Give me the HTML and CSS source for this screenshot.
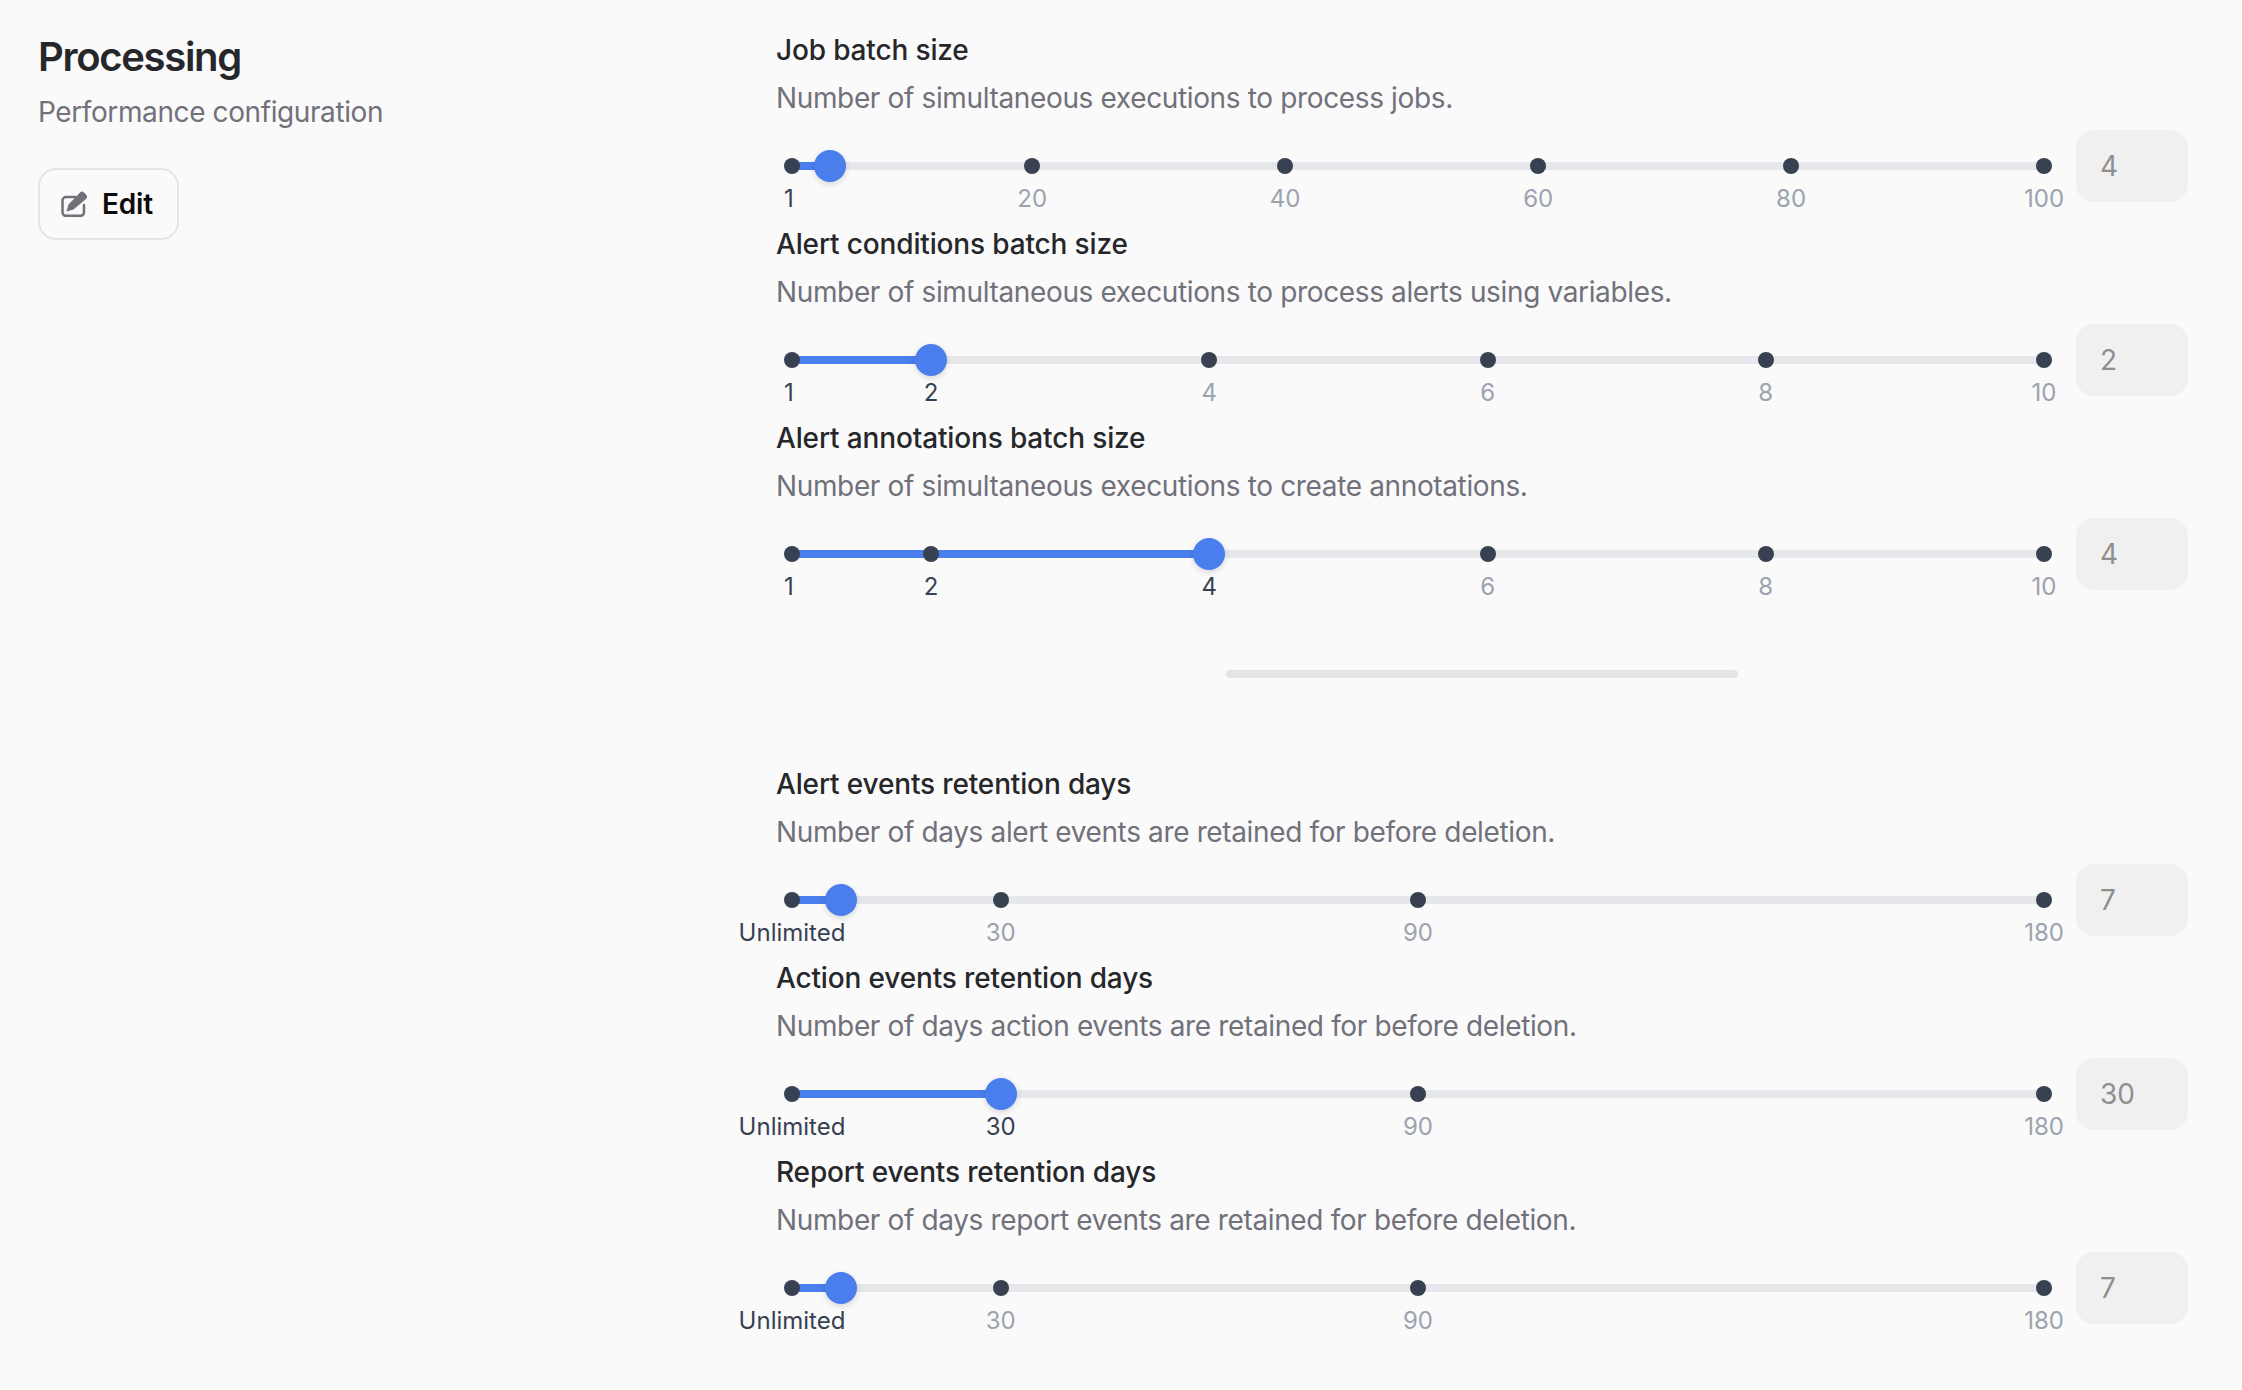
FILE: index.html
```html
<!DOCTYPE html>
<html lang="en">
<head>
    <meta charset="UTF-8">
    <title>Processing</title>
    <link rel="stylesheet" href="styles.css">
</head>
<body>
    <main class="page">
        <!-- left -->
        <section class="intro">
            <h1 class="intro__title">Processing</h1>
            <p class="intro__sub">Performance configuration</p>
            <button class="btn--edit" type="button">
                <svg class="btn__icon" viewBox="0 0 26 26" aria-hidden="true">
                    <path class="btn__box" d="M14 6H5a3.500 3.500 0 0 0-3.500 3.500V21.300a3.500 3.500 0 0 0 3.500 3.500H19.500a3.500 3.500 0 0 0 3.500-3.500V14"/>
                    <path class="btn__pen" d="M5.500 20.500L7.500 13.500L18.800 1.800a3 3 0 0 1 4.400 0l1.800 1.800a3 3 0 0 1 0 4.300L12.500 18.500z"/>
                </svg>
                Edit
            </button>
        </section>

        <!-- settings -->
        <section class="settings">
            <div class="field">
                <h2 class="field__label">Job batch size</h2>
                <p class="field__desc">Number of simultaneous executions to process jobs.</p>
                <div class="slider">
                    <div class="slider__box">
                        <div class="track">
                            <div class="track__fill" style="width: 3.03%"></div>
                            <span class="mark mark--on" style="left: 0%"><i class="mark__dot"></i><b class="mark__txt mark__txt--one">1</b></span>
                            <span class="mark" style="left: 19.19%"><i class="mark__dot"></i><b class="mark__txt">20</b></span>
                            <span class="mark" style="left: 39.39%"><i class="mark__dot"></i><b class="mark__txt">40</b></span>
                            <span class="mark" style="left: 59.6%"><i class="mark__dot"></i><b class="mark__txt">60</b></span>
                            <span class="mark" style="left: 79.8%"><i class="mark__dot"></i><b class="mark__txt">80</b></span>
                            <span class="mark" style="left: 100%"><i class="mark__dot"></i><b class="mark__txt">100</b></span>
                            <span class="thumb" style="left: 3.03%"></span>
                        </div>
                    </div>
                    <input class="slider__val" type="text" value="4" disabled>
                </div>
            </div>

            <div class="field">
                <h2 class="field__label">Alert conditions batch size</h2>
                <p class="field__desc">Number of simultaneous executions to process alerts using variables.</p>
                <div class="slider">
                    <div class="slider__box">
                        <div class="track">
                            <div class="track__fill" style="width: 11.11%"></div>
                            <span class="mark mark--on" style="left: 0%"><i class="mark__dot"></i><b class="mark__txt mark__txt--one">1</b></span>
                            <span class="mark mark--on" style="left: 11.11%"><i class="mark__dot"></i><b class="mark__txt">2</b></span>
                            <span class="mark" style="left: 33.33%"><i class="mark__dot"></i><b class="mark__txt">4</b></span>
                            <span class="mark" style="left: 55.56%"><i class="mark__dot"></i><b class="mark__txt">6</b></span>
                            <span class="mark" style="left: 77.78%"><i class="mark__dot"></i><b class="mark__txt">8</b></span>
                            <span class="mark" style="left: 100%"><i class="mark__dot"></i><b class="mark__txt">10</b></span>
                            <span class="thumb" style="left: 11.11%"></span>
                        </div>
                    </div>
                    <input class="slider__val" type="text" value="2" disabled>
                </div>
            </div>

            <div class="field">
                <h2 class="field__label">Alert annotations batch size</h2>
                <p class="field__desc">Number of simultaneous executions to create annotations.</p>
                <div class="slider">
                    <div class="slider__box">
                        <div class="track">
                            <div class="track__fill" style="width: 33.33%"></div>
                            <span class="mark mark--on" style="left: 0%"><i class="mark__dot"></i><b class="mark__txt mark__txt--one">1</b></span>
                            <span class="mark mark--on" style="left: 11.11%"><i class="mark__dot"></i><b class="mark__txt">2</b></span>
                            <span class="mark mark--on" style="left: 33.33%"><i class="mark__dot"></i><b class="mark__txt">4</b></span>
                            <span class="mark" style="left: 55.56%"><i class="mark__dot"></i><b class="mark__txt">6</b></span>
                            <span class="mark" style="left: 77.78%"><i class="mark__dot"></i><b class="mark__txt">8</b></span>
                            <span class="mark" style="left: 100%"><i class="mark__dot"></i><b class="mark__txt">10</b></span>
                            <span class="thumb" style="left: 33.33%"></span>
                        </div>
                    </div>
                    <input class="slider__val" type="text" value="4" disabled>
                </div>
            </div>

            <div class="divider"></div>

            <div class="field">
                <h2 class="field__label">Alert events retention days</h2>
                <p class="field__desc">Number of days alert events are retained for before deletion.</p>
                <div class="slider">
                    <div class="slider__box">
                        <div class="track">
                            <div class="track__fill" style="width: 3.89%"></div>
                            <span class="mark mark--on" style="left: 0%"><i class="mark__dot"></i><b class="mark__txt">Unlimited</b></span>
                            <span class="mark" style="left: 16.67%"><i class="mark__dot"></i><b class="mark__txt">30</b></span>
                            <span class="mark" style="left: 50%"><i class="mark__dot"></i><b class="mark__txt">90</b></span>
                            <span class="mark" style="left: 100%"><i class="mark__dot"></i><b class="mark__txt">180</b></span>
                            <span class="thumb" style="left: 3.89%"></span>
                        </div>
                    </div>
                    <input class="slider__val" type="text" value="7" disabled>
                </div>
            </div>

            <div class="field">
                <h2 class="field__label">Action events retention days</h2>
                <p class="field__desc">Number of days action events are retained for before deletion.</p>
                <div class="slider">
                    <div class="slider__box">
                        <div class="track">
                            <div class="track__fill" style="width: 16.67%"></div>
                            <span class="mark mark--on" style="left: 0%"><i class="mark__dot"></i><b class="mark__txt">Unlimited</b></span>
                            <span class="mark mark--on" style="left: 16.67%"><i class="mark__dot"></i><b class="mark__txt">30</b></span>
                            <span class="mark" style="left: 50%"><i class="mark__dot"></i><b class="mark__txt">90</b></span>
                            <span class="mark" style="left: 100%"><i class="mark__dot"></i><b class="mark__txt">180</b></span>
                            <span class="thumb" style="left: 16.67%"></span>
                        </div>
                    </div>
                    <input class="slider__val" type="text" value="30" disabled>
                </div>
            </div>

            <div class="field">
                <h2 class="field__label">Report events retention days</h2>
                <p class="field__desc">Number of days report events are retained for before deletion.</p>
                <div class="slider">
                    <div class="slider__box">
                        <div class="track">
                            <div class="track__fill" style="width: 3.89%"></div>
                            <span class="mark mark--on" style="left: 0%"><i class="mark__dot"></i><b class="mark__txt">Unlimited</b></span>
                            <span class="mark" style="left: 16.67%"><i class="mark__dot"></i><b class="mark__txt">30</b></span>
                            <span class="mark" style="left: 50%"><i class="mark__dot"></i><b class="mark__txt">90</b></span>
                            <span class="mark" style="left: 100%"><i class="mark__dot"></i><b class="mark__txt">180</b></span>
                            <span class="thumb" style="left: 3.89%"></span>
                        </div>
                    </div>
                    <input class="slider__val" type="text" value="7" disabled>
                </div>
            </div>
        </section>
    </main>
</body>
</html>
```
FILE: styles.css
```css
* {box-sizing: border-box;}
html, body {margin: 0; height: 100%; background-color: #fafafa;}
body {font-family: Inter, "Liberation Sans", sans-serif; color: #202124;}

.page {display: flex; padding: 30px 54px 0 38px;}

/* left */
.intro {width: 738px; flex: none; padding-top: 5px;}
.intro__title {margin: 0; font-size: 40px; line-height: 44px; font-weight: 600; letter-spacing: -1.3px; color: #26272a;}
.intro__sub {margin: 13px 0 0; font-size: 28px; line-height: 40px; letter-spacing: -.4px; color: #71717a;}
.btn--edit {
    display: flex; align-items: center; gap: 15px; margin-top: 36px; width: 141px; height: 72px; padding: 0 21px;
    background: none; border: 2px solid #e5e5e5; border-radius: 18px;
    font: 600 28px Inter, sans-serif; letter-spacing: -.2px; color: #0b0b0b;
}
.btn__icon {width: 26px; height: 26px; flex: none;}
.btn__box {fill: none; stroke: #71717a; stroke-width: 2.5; stroke-linecap: round;}
.btn__pen {fill: #71717a;}

/* settings */
.settings {flex: 1; min-width: 0;}
.field {height: 194px;}
.field__label {margin: 0; font-size: 28px; line-height: 40px; font-weight: 500; letter-spacing: -.15px; color: #26272a;}
.field__desc {margin: 8px 0 0; font-size: 28px; line-height: 40px; letter-spacing: -.36px; color: #71717a;}

.slider {display: flex; margin-top: 12px; height: 72px;}
.slider__box {flex: 1; display: flex; align-items: center; padding: 0 32px 0 16px;}
.slider__val {
    width: 112px; height: 72px; padding: 0 24px; border: none; border-radius: 18px;
    background-color: #f0f0f0; font: 28px Inter, sans-serif; color: #8f8f8f; -webkit-text-fill-color: #8f8f8f; opacity: 1;
}

.track {position: relative; flex: 1; height: 8px; border-radius: 4px; background-color: #e5e7eb;}
.track__fill {height: 100%; border-radius: 4px; background-color: #4a7eed;}

.mark {position: absolute; top: 0; width: 0;}
.mark__dot {position: absolute; top: -4px; left: -8px; width: 16px; height: 16px; border-radius: 50%; background-color: #374151;}
.mark__txt {
    position: absolute; top: 21px; left: 0; transform: translateX(-50%);
    font-size: 24px; line-height: 32px; font-weight: 400; white-space: nowrap; color: #9ca3af;
}
.mark__txt--one {margin-left: -3px;}
.mark--on .mark__txt {color: #374151;}

.thumb {
    position: absolute; top: -12px; width: 32px; height: 32px; margin-left: -16px; border-radius: 50%;
    background-color: #4a7eed; box-shadow: 0 2px 6px rgba(0, 0, 0, .15);
}

.divider {width: 512px; height: 8px; margin: 58px auto 86px; border-radius: 4px; background-color: #e4e4e4;}
```
